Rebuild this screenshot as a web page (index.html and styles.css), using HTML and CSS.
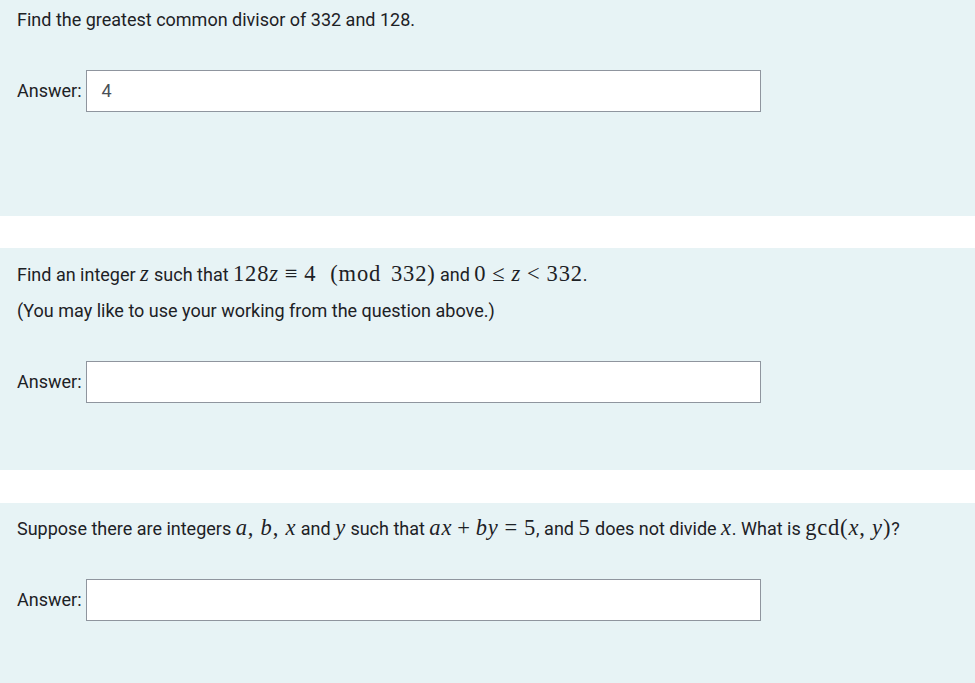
FILE: index.html
```html
<!DOCTYPE html>
<html>
<head>
<meta charset="utf-8">
<link rel="stylesheet" href="styles.css">
</head>
<body>
<div class="que q1">
  <div class="qtext">
    <p>Find the greatest common divisor of 332 and 128.</p>
  </div>
  <div class="ans">
    <label class="lbl">Answer:</label>
    <div class="box">4</div>
  </div>
</div>

<div class="que q2">
  <div class="qtext">
    <p class="mline">Find an integer <span class="m"><i>z</i></span> such that <span class="m">128<i>z</i><span class="rel">≡</span>4<span class="sp"></span>(mod<span class="sp2"></span>332)</span> and <span class="m">0<span class="rel">≤</span><i>z</i><span class="rel">&lt;</span>332</span>.</p>
    <p>(You may like to use your working from the question above.)</p>
  </div>
  <div class="ans">
    <label class="lbl">Answer:</label>
    <div class="box"></div>
  </div>
</div>

<div class="que q3">
  <div class="qtext">
    <p class="mline">Suppose there are integers <span class="m"><i>a</i>, <i>b</i>, <i>x</i></span> and <span class="m"><i>y</i></span> such that <span class="m"><i>ax</i><span class="bin">+</span><i>by</i><span class="rel">=</span>5</span>, and <span class="m">5</span> does not divide <span class="m"><i>x</i></span>. What is <span class="m">gcd(<i>x</i>, <i>y</i>)</span>?</p>
  </div>
  <div class="ans">
    <label class="lbl">Answer:</label>
    <div class="box"></div>
  </div>
</div>
</body>
</html>
```

FILE: styles.css
```css
html, body {
  margin: 0;
  padding: 0;
  background: #ffffff;
}
body {
  font-family: Roboto, "Liberation Sans", sans-serif;
  font-size: 18px;
  color: #1d2125;
}
.que {
  background: #e7f3f5;
  padding: 8px 17px 67px 17px;
  margin-bottom: 33px;
}
.q1 {
  min-height: 141px;
  margin-bottom: 32px;
}
.q3 {
  margin-bottom: 0;
}
.qtext p {
  margin: 0;
  line-height: 24px;
}
.qtext p + p {
  margin-top: 12px;
}
.qtext p.mline {
  padding-top: 6px;
}
.q3 .qtext p.mline {
  padding-top: 5px;
}
.m {
  font-family: "Liberation Serif", "DejaVu Serif", serif;
  font-size: 22.5px;
  white-space: nowrap;
  letter-spacing: 0.8px;
}
.m i {
  font-style: italic;
}
.rel {
  margin: 0 6px;
}
.bin {
  margin: 0 5px;
}
.sp {
  display: inline-block;
  width: 14px;
}
.sp2 {
  display: inline-block;
  width: 10px;
}
.ans {
  display: flex;
  align-items: center;
  gap: 4px;
  margin-top: 38px;
}
.lbl {
  line-height: 24px;
}
.box {
  box-sizing: border-box;
  width: 675px;
  height: 42px;
  background: #ffffff;
  border: 1px solid #8f959e;
  padding: 0 15px;
  line-height: 40px;
  color: #495057;
}
```
